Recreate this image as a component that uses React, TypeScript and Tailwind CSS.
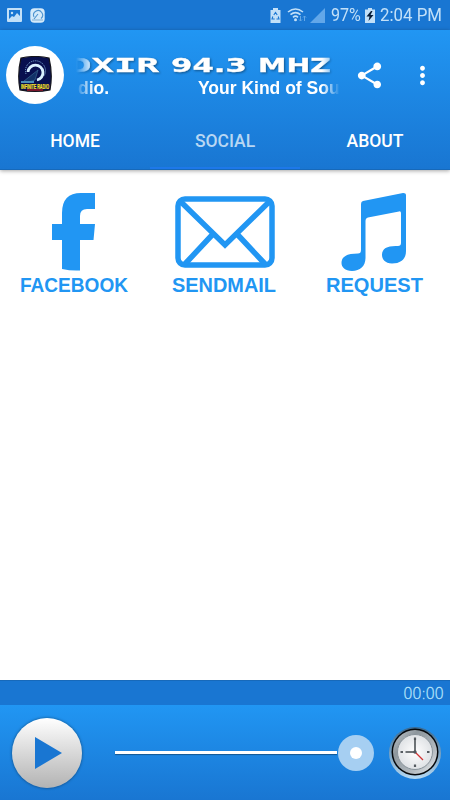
import React, { useState } from 'react';
import { MdShare, MdMoreVert } from 'react-icons/md';

const tabs = ['HOME', 'SOCIAL', 'ABOUT'];

const StationLogo = () => (
  <svg className="mb-px" width="34" height="38" viewBox="0 0 34 38">
    <path d="M3 2 Q17 -1 31 2 Q35 18 32 34 Q17 37 2 34 Q-1 18 3 2Z" fill="#08104f" stroke="#15151c" strokeWidth="1.2" />
    <path d="M8 18 A10 10 0 1 1 26 20" fill="none" stroke="#8bbce8" strokeWidth="1" strokeDasharray="1 1" />
    <path d="M10 16 A7.5 7.5 0 1 1 19 24" fill="none" stroke="#d9f1ff" strokeWidth="2.8" />
    <path d="M20 14 L6 25 L11 26 L17 24 Z" fill="#123268" stroke="#3f7098" strokeWidth=".6" />
    <path d="M3 26 H16" stroke="#4d8db6" strokeWidth="2" />
    <text x="3" y="32.5" textLength="28" lengthAdjust="spacingAndGlyphs" fontFamily="Liberation Sans" fontWeight="700" fontSize="6.5" fill="#ffe521" stroke="#ffe521" strokeWidth=".2">INFINITE RADIO</text>
    <path d="M9 34 H25" stroke="#aa1920" strokeWidth="1.4" />
  </svg>
);

const StatusBar = () => (
  <div className="flex h-[30px] shrink-0 items-center bg-[#1976d2] pl-[7px] pr-[9px] text-[#c2e0f8]">
    <svg width="15" height="14" viewBox="0 0 15 14">
      <path fillRule="evenodd" d="M1 0h13a1 1 0 0 1 1 1v12a1 1 0 0 1-1 1H1a1 1 0 0 1-1-1V1a1 1 0 0 1 1-1zm1 2v9l3-3 2 1 3-4 3 3V2z" fill="currentColor" />
      <circle cx="5" cy="5" r="1.2" fill="currentColor" />
    </svg>
    <svg className="ml-2" width="15" height="15" viewBox="0 0 15 15">
      <rect x=".3" y=".3" width="14.4" height="14.4" rx="4" fill="#d4eafa" />
      <path d="M4 9a4.5 4.5 0 1 1 7 1.5M8 6l-4 5" fill="none" stroke="#4d93cf" strokeWidth="1.1" />
      <path d="M2 12h11" stroke="#82aed1" />
    </svg>
    <div className="ml-auto flex items-center">
      <svg width="11" height="15" viewBox="0 0 11 15">
        <path d="M3 0h5v2h2.5v13H.5V2H3z" fill="currentColor" />
        <path d="M3.8 7l1.7-2.5L7.2 7M8.2 8.5l.8 2.5H6.500M4.700 11H2l.8-2.500" fill="none" stroke="#1976d2" strokeWidth="1.1" />
      </svg>
      <svg className="ml-[6px]" width="20" height="16" viewBox="0 0 20 16">
        <path d="M1 5Q8.5 -1 16 5M3.5 7.7Q8.5 3.5 13.5 7.7M6 10.3Q8.5 8 11 10.3" fill="none" stroke="currentColor" strokeWidth="1.6" />
        <circle cx="8.5" cy="12.8" r="1.5" fill="currentColor" />
        <path d="M13.5 9v5m-1.5-1.5 1.5 1.5 1.5-1.5M17.500 14V9m-1.500 1.500L17.500 9 19 10.500" fill="none" stroke="#65a9e7" />
      </svg>
      <svg className="ml-[3px]" width="15" height="15" viewBox="0 0 15 15">
        <path d="M15 0v15H0z" fill="#62a7e9" />
      </svg>
      <span className="ml-[6px] w-[30px] whitespace-nowrap font-['Roboto',sans-serif] text-[18.5px] leading-[30px]">
        <span className="inline-block origin-left scale-x-[0.87]">97%</span>
      </span>
      <svg className="ml-[4px]" width="10" height="15" viewBox="0 0 10 15">
        <path d="M3 0h4v1.5h3V15H0V1.5h3z" fill="currentColor" />
        <path d="M6 3L1.5 8.5h3L3.5 13 8.5 7h-3l2-4z" fill="#081d37" />
      </svg>
      <span className="ml-[5px] w-[61px] whitespace-nowrap font-['Roboto',sans-serif] text-[18.5px] leading-[30px]">
        <span className="inline-block origin-left scale-x-[0.91]">2:04 PM</span>
      </span>
    </div>
  </div>
);

const FacebookIcon = () => (
  <svg width="46" height="79" viewBox="0 0 46 79" fill="#2196f3">
    <path d="M44 0v16h-8q-7 0-7 7v8h15l-1.500 16H29v30.500q-9 .5-18-1.500V47H1V31h10V20Q11 0 30 0z" />
  </svg>
);

const MailIcon = () => (
  <svg width="100" height="72" viewBox="0 0 100 72" fill="none" stroke="#2196f3" strokeWidth="5.5">
    <rect x="3" y="3" width="94" height="66" rx="7" />
    <path d="M5 5l45 44L95 5M9 69l29-31M91 69L62 38" />
  </svg>
);

const MusicIcon = () => (
  <svg width="66" height="79" viewBox="0 0 66 79" fill="#2196f3">
    <path d="M22 8L62 .1Q65 0 65 2.5V58C65 66 60 70.5 51 70.5C44 70.5 41 66 41 62C41 55 47 52.5 57 53Q60 53 60 50V20Q60 18 58 18.4L27 24.5Q24.5 25 24.5 28V65C24.5 73 19 78 11 78C4 78 .5 74 .5 70C.5 63 7 60.5 17 60.5Q20 60.5 20 57V11Q20 8.5 22 8z" />
  </svg>
);

interface SocialItemProps {
  label: string;
  labelWidth: number;
  icon: React.ReactNode;
}

const SocialItem = ({ label, labelWidth, icon }: SocialItemProps) => (
  <button className="flex h-[130px] w-[150px] flex-col items-center">
    <span className="flex h-[102px] items-end justify-center">{icon}</span>
    <svg className="mt-[3px]" width={labelWidth} height="20" overflow="visible">
      <text x="0" y="17" textLength={labelWidth} lengthAdjust="spacingAndGlyphs" fontFamily="Liberation Sans, Arial, sans-serif" fontWeight="700" fontSize="19.5" fill="#2196f3">{label}</text>
    </svg>
  </button>
);

const SleepClock = () => (
  <svg width="54" height="54" viewBox="0 0 54 54">
    <defs>
      <linearGradient id="rim" x2="0" y2="1">
        <stop stopColor="#39688f" />
        <stop offset="1" stopColor="#b5d9f3" />
      </linearGradient>
      <linearGradient id="bezel" x2="1" y2="1">
        <stop stopColor="#c5cbd0" />
        <stop offset=".3" stopColor="#8d969c" />
        <stop offset=".7" stopColor="#b4bbc0" />
        <stop offset="1" stopColor="#eff1f3" />
      </linearGradient>
      <radialGradient id="face">
        <stop stopColor="#ffffff" />
        <stop offset="1" stopColor="#dfe2e5" />
      </radialGradient>
    </defs>
    <circle cx="27" cy="27" r="26" fill="url(#rim)" />
    <circle cx="27" cy="26" r="23.500" fill="#05080b" />
    <circle cx="27" cy="26" r="22" fill="url(#bezel)" />
    <circle cx="27" cy="26" r="17.500" fill="url(#face)" stroke="#8a949b" />
    <path d="M27 11.500v2.500M27 38.500v2.500M12.500 26h2.500M39 26h2.500" stroke="#555b60" strokeWidth="2.200" />
    <path d="M17.500 26h9.500V13.500" fill="none" stroke="#43494e" strokeWidth="1.500" />
    <path d="M27 26l8 8" stroke="#d13535" strokeWidth="1.300" />
    <circle cx="27" cy="26" r="1.700" fill="#50565c" />
  </svg>
);

const App = () => {
  const [activeTab, setActiveTab] = useState('SOCIAL');

  return (
    <div className="flex h-[800px] w-[450px] flex-col overflow-hidden bg-white">
      <StatusBar />
      <header className="z-10 flex h-[140px] shrink-0 flex-col border-b border-[#1769ba] bg-linear-to-b from-[#2196f3] to-[#1976d2] shadow-[0_1px_4px_rgba(0,0,0,0.35)]">
        <div className="flex h-[82px] items-center pt-[8px]">
          <div className="ml-[6px] flex size-[58px] shrink-0 items-center justify-center rounded-full bg-white">
            <StationLogo />
          </div>
          <div className="ml-[12px] h-[50px] w-[264px] shrink-0 overflow-hidden text-white mask-[linear-gradient(to_right,transparent,black_18px,black_246px,transparent)]">
            <svg className="drop-shadow-[1px_1px_1px_rgba(0,0,0,0.4)]" width="264" height="29" fill="#fff" stroke="#fff" strokeWidth=".3" fontFamily="DejaVu Sans, sans-serif" fontWeight="700" fontSize="19">
              <text x="-7" y="22" textLength="90" lengthAdjust="spacingAndGlyphs" fontFamily="DejaVu Sans Mono">DXIR</text>
              <text x="95" y="22" textLength="76" lengthAdjust="spacingAndGlyphs">94.3</text>
              <text x="182" y="22" textLength="73" lengthAdjust="spacingAndGlyphs">MHZ</text>
            </svg>
            <div className="flex whitespace-nowrap pl-[2px] font-['Liberation_Sans',Arial,sans-serif] text-[17.5px] font-bold leading-[19px]">
              <span className="w-[120px] shrink-0">dio.</span>
              <span>Your Kind of Sou</span>
            </div>
          </div>
          <button className="ml-[14px]">
            <MdShare className="size-[31px] text-white" />
          </button>
          <button className="ml-[23px]">
            <MdMoreVert className="size-[29px] text-white" />
          </button>
        </div>
        <nav className="flex flex-1 font-['Roboto',sans-serif] text-[17.5px] font-medium">
          {tabs.map((tab) => (
            <button
              key={tab}
              onClick={() => setActiveTab(tab)}
              className={`flex-1 border-b-2 pt-[3px] ${activeTab === tab ? 'border-[#1d78ea] text-[#b8d7f3]' : 'border-transparent text-white'}`}
            >
              {tab}
            </button>
          ))}
        </nav>
      </header>

      <main className="-ml-px flex flex-1 items-start">
        <SocialItem label="FACEBOOK" labelWidth={108} icon={<FacebookIcon />} />
        <SocialItem label="SENDMAIL" labelWidth={104} icon={<span className="pb-[4px] pl-px"><MailIcon /></span>} />
        <SocialItem label="REQUEST" labelWidth={97} icon={<MusicIcon />} />
      </main>

      <footer className="shrink-0">
        <div className="flex h-[25px] items-center justify-end border-t border-[#1769ba] bg-[#1976d2] pr-[6px] text-[#b5e3fa]">
          <svg width="41" height="16">
            <text x="0" y="13.5" textLength="41" fontFamily="DejaVu Sans, sans-serif" fontWeight="200" fontSize="15.5" fill="currentColor" stroke="currentColor" strokeWidth=".3">00:00</text>
          </svg>
        </div>
        <div className="flex h-[95px] items-center bg-linear-to-b from-[#2196f3] to-[#1976d2]">
          <button className="ml-[12px] flex size-[70px] items-center justify-center rounded-full bg-linear-to-b from-white to-[#b3b3b3] shadow-[0_0_3px_rgba(0,0,0,0.5)]">
            <svg className="ml-[3px]" width="28" height="32" viewBox="0 0 28 32">
              <path d="M0 0v32l27-16z" fill="#1976d2" />
            </svg>
          </button>
          <div className="ml-[33px] flex items-center">
            <div className="h-[3px] w-[222px] bg-white shadow-[0_1px_1px_rgba(0,0,0,0.35)]" />
            <div className="ml-[1px] flex size-[36px] items-center justify-center rounded-full bg-[#a6cff2]">
              <div className="size-[12px] rounded-full bg-white" />
            </div>
          </div>
          <button className="ml-[14px]">
            <SleepClock />
          </button>
        </div>
      </footer>
    </div>
  );
};

export default App;
